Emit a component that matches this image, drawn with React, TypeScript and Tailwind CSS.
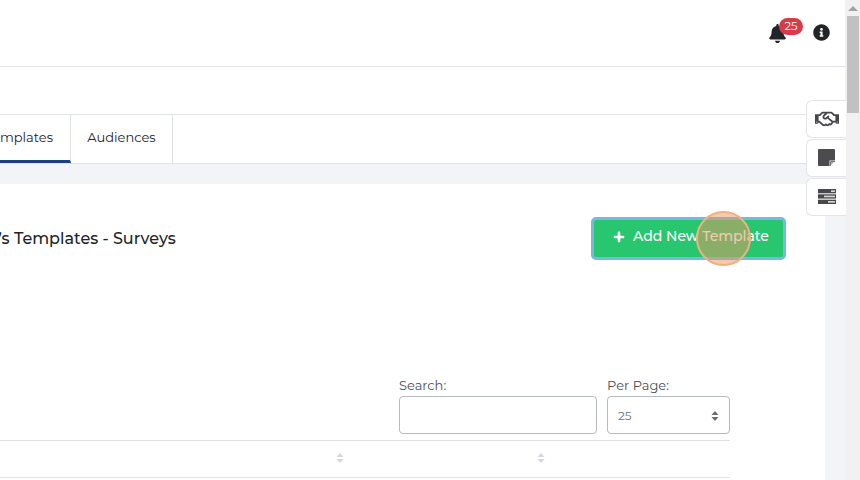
import { Plus } from 'lucide-react';
import { FaBell, FaInfoCircle, FaRegHandshake } from 'react-icons/fa';

function NoteIcon() {
  return (
    <svg width="17" height="17" viewBox="0 0 17 17">
      <path d="M1 0h15a1 1 0 0 1 1 1v10.500h-5.500V17H1a1 1 0 0 1-1-1V1a1 1 0 0 1 1-1z" fill="#4b4b50" />
      <path d="M12.500 12.500H17M12.500 12.500V17" stroke="#77777c" strokeWidth="1" />
      <path d="M13 13h3l-3 3z" fill="#a9a9ad" />
    </svg>
  );
}

function ServerIcon() {
  return (
    <svg width="18" height="15" viewBox="0 0 18 15">
      <rect width="18" height="4.300" fill="#46464b" />
      <rect y="5.300" width="18" height="4.300" fill="#46464b" />
      <rect y="10.700" width="18" height="4.300" fill="#46464b" />
      <rect x="13" y="1.300" width="4" height="1.700" fill="#d4d4d8" />
      <rect x="6" y="6.600" width="11" height="1.700" fill="#d4d4d8" />
      <rect x="10" y="12" width="7" height="1.700" fill="#d4d4d8" />
    </svg>
  );
}

function SortArrows({ color = '#d4d7dc' }: { color?: string }) {
  return (
    <svg width="8" height="10" viewBox="0 0 8 10">
      <path d="M4 0l3.500 4h-7zM4 10L.5 6h7z" fill={color} />
    </svg>
  );
}

export default function App() {
  return (
    <div className="relative flex h-[480px] w-[860px] overflow-hidden bg-[#f3f4f8] font-['Montserrat','Noto_Sans',sans-serif] text-[#212529]">
      <div className="flex w-[845px] flex-col">
        <header className="flex h-[67px] items-center justify-end border-b border-[#dee2e6] bg-white pb-[1px] pr-[15px]">
          <div className="relative mr-[26px] mt-[1px] text-[#212529]">
            <FaBell size={19} />
            <span className="absolute left-[11px] top-[-6px] h-[17px] w-[24px] rounded-full bg-[#d63b4a] text-center text-[11.500px] leading-[16px] text-white">25</span>
          </div>
          <FaInfoCircle size={17} className="text-[#212529]" />
        </header>
        <div className="h-[48px] border-b border-[#dee2e6] bg-white" />
        <nav className="flex h-[49px] border-b border-[#dee2e6] bg-white text-[13px]">
          <div className="flex w-[71px] items-center justify-end overflow-hidden border-b-[3px] border-r border-b-[#1d3f7f] border-r-[#dee2e6] pr-[17px] pt-[1px]">
            <span className="whitespace-nowrap">Templates</span>
          </div>
          <div className="flex w-[102px] items-center justify-center border-r border-[#dee2e6] pb-[2px]">Audiences</div>
        </nav>
        <div className="mt-[20px] flex w-[825px] flex-1 flex-col bg-white">
          <div className="flex items-center justify-between pr-[39px] pt-[33px]">
            <h2 className="ml-[-11px] whitespace-nowrap text-[16px] font-medium">y’s Templates - Surveys</h2>
            <button className="flex h-[43px] w-[195px] items-center gap-[7px] rounded-[5px] border-[3px] border-[#74b9e0] bg-[#28c76f] pb-[4px] pl-[18px] text-[14px] font-medium text-white">
              <Plus size={14} strokeWidth={4.500} />
              Add New Template
            </button>
          </div>
          <div className="mt-[115px] flex justify-end gap-[10px] pr-[95px] text-[13px] text-[#495057]">
            <label className="flex flex-col">
              <span className="leading-[21px]">Search:</span>
              <div className="h-[38px] w-[198px] rounded-[4px] border border-[#b5bac0]" />
            </label>
            <label className="flex flex-col">
              <span className="leading-[21px]">Per Page:</span>
              <div className="flex h-[38px] w-[123px] items-center justify-between rounded-[4px] border border-[#b5bac0] pl-[10px] pr-[10px] pt-[1px] text-[12px] text-[#6e6e76]">
                25
                <SortArrows color="#6a6a70" />
              </div>
            </label>
          </div>
          <div className="mr-[95px] mt-[6px] flex h-[38px] items-center border-y border-[#dee2e6] pb-[2px]">
            <span className="ml-[336px]"><SortArrows /></span>
            <span className="ml-[193px]"><SortArrows /></span>
          </div>
        </div>
      </div>
      <aside className="flex w-[15px] flex-col bg-[#f1f1f1]">
        <div className="flex h-[16px] items-center justify-center"><div className="border-x-[5px] border-b-[5px] border-x-transparent border-b-[#a3a3a3]" /></div>
        <div className="ml-[2px] h-[97px] w-[12px] bg-[#c1c1c1]" />
      </aside>
      <div className="absolute left-[806px] top-[100px] flex flex-col gap-[1px]">
        {[<FaRegHandshake key="h" size={24} className="text-[#46464b]" />, <NoteIcon key="n" />, <ServerIcon key="s" />].map((icon, i) => (
          <div key={i} className="flex h-[38px] w-[40px] items-center justify-center rounded-l-[6px] border border-r-0 border-[#e3e5e9] bg-white pb-[1px]">
            {icon}
          </div>
        ))}
      </div>
      <div className="absolute left-[696px] top-[211px] h-[55px] w-[55px] rounded-full border-2 border-[#f0b080] bg-[#e8955f]/50" />
    </div>
  );
}
